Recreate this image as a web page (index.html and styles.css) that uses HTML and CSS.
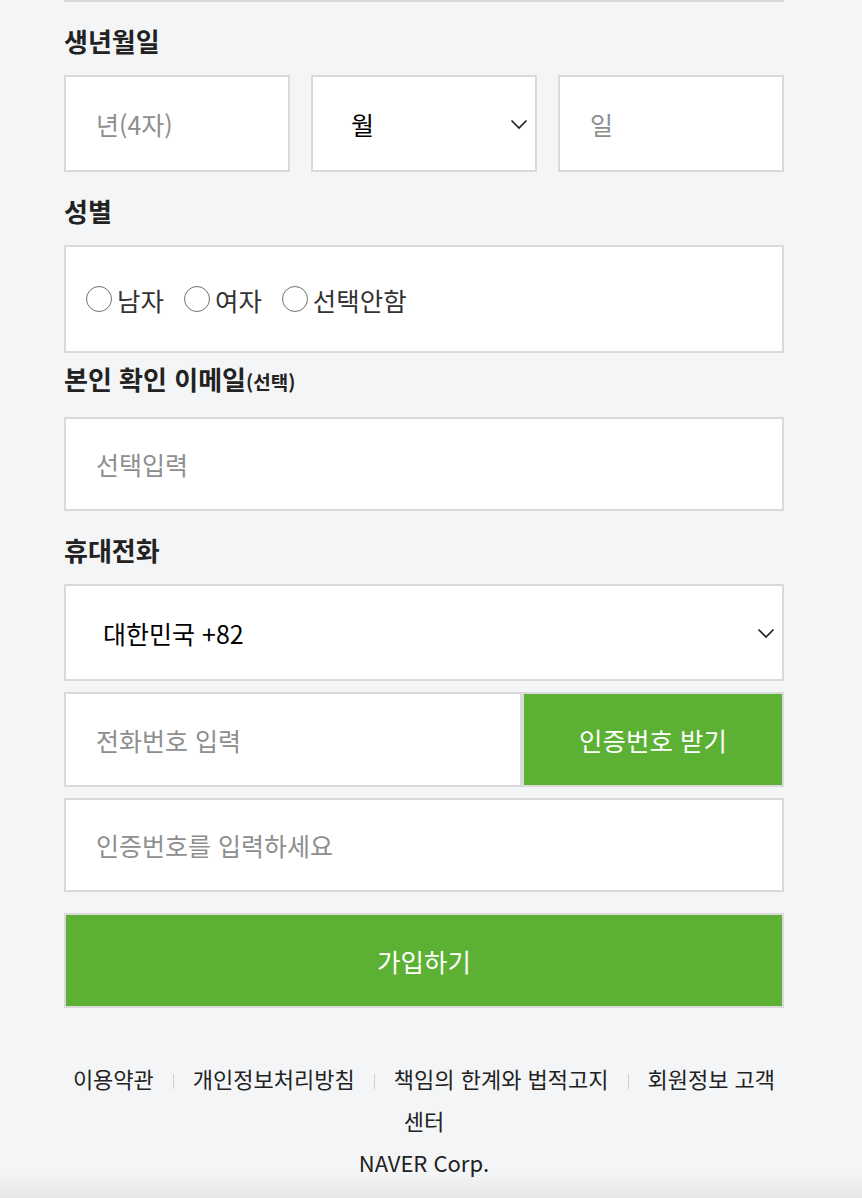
FILE: index.html
```html
<!DOCTYPE html>
<html lang="ko">
<head>
<meta charset="utf-8">
<title>회원가입</title>
<link rel="stylesheet" href="styles.css">
</head>
<body>
<div class="page">
  <div class="box-tail"></div>

  <h3 class="label label-first">생년월일</h3>
  <div class="birth-row">
    <input class="box field" type="text" placeholder="년(4자)">
    <div class="box select select-month">
      <span>월</span>
      <svg class="chev" width="18" height="11" viewBox="0 0 18 11"><polyline points="1.5,1.5 9,9 16.5,1.5" fill="none" stroke="#222" stroke-width="1.7"/></svg>
    </div>
    <input class="box field" type="text" placeholder="일">
  </div>

  <h3 class="label">성별</h3>
  <div class="box gender">
    <label class="radio"><input type="radio" name="g"><span>남자</span></label>
    <label class="radio"><input type="radio" name="g"><span>여자</span></label>
    <label class="radio"><input type="radio" name="g"><span>선택안함</span></label>
  </div>

  <h3 class="label label-email">본인 확인 이메일<span class="opt">(선택)</span></h3>
  <input class="box field field-email" type="text" placeholder="선택입력">

  <h3 class="label">휴대전화</h3>
  <div class="box select select-country">
    <span>대한민국 +82</span>
    <svg class="chev" width="18" height="11" viewBox="0 0 18 11"><polyline points="1.5,1.5 9,9 16.5,1.5" fill="none" stroke="#222" stroke-width="1.7"/></svg>
  </div>
  <div class="phone-row">
    <input class="box field field-phone" type="text" placeholder="전화번호 입력">
    <button class="btn btn-code" type="button">인증번호 받기</button>
  </div>
  <input class="box field field-verify" type="text" placeholder="인증번호를 입력하세요">

  <button class="btn btn-join" type="button">가입하기</button>

  <footer class="footer">
    <p class="links">
      <a>이용약관</a><span class="sep"></span><a>개인정보처리방침</a><span class="sep"></span><a>책임의 한계와 법적고지</a><span class="sep"></span><a>회원정보 고객<wbr>센터</a>
    </p>
    <p class="corp">NAVER Corp.</p>
  </footer>
</div>
</body>
</html>
```

FILE: styles.css
```css
html {
  background: #f4f5f7 linear-gradient(to bottom, rgba(230,231,233,0) calc(100vh - 26px), #e5e6e8 100vh) no-repeat fixed;
}
body {
  margin: 0;
  font-family: "Noto Sans CJK KR", "Noto Sans", sans-serif;
  color: #222;
}
.page {
  width: 720px;
  margin-left: 64px;
  display: flex;
  flex-direction: column;
}
.box-tail {
  height: 0;
  border-bottom: 2px solid #dadada;
}
.label {
  margin: 21px 0 16px;
  font-size: 26px;
  font-weight: 700;
  line-height: 36px;
  color: #222;
}
.label-first { margin-top: 21px; }
.label-email { margin-top: 8px; margin-bottom: 17px; }
.label .opt {
  font-size: 19px;
}
.box {
  box-sizing: border-box;
  background: #fff;
  border: 2px solid #dadada;
  margin: 0;
}
.field {
  font-family: inherit;
  font-size: 25px;
  padding: 0 0 0 30px;
  color: #222;
  outline: none;
  width: 100%;
}
.field::placeholder {
  color: #8e8e8e;
}
.birth-row {
  display: grid;
  grid-template-columns: 1fr 1fr 1fr;
  column-gap: 21px;
}
.birth-row .box {
  height: 97px;
}
.select {
  display: flex;
  align-items: center;
  justify-content: space-between;
  font-size: 25px;
  color: #000;
  padding: 0 7px 0 37px;
}
.select-month {
  padding-left: 38px;
}
.select-country {
  height: 97px;
  padding-left: 37px;
}
.chev {
  display: block;
  margin-top: 2px;
}
.gender {
  height: 108px;
  display: flex;
  align-items: center;
  padding-left: 20px;
  gap: 20px;
}
.radio {
  display: flex;
  align-items: center;
  gap: 5px;
  font-size: 25.5px;
  color: #333;
}
.radio input {
  appearance: none;
  -webkit-appearance: none;
  width: 26px;
  height: 26px;
  margin: 0;
  border: 1.8px solid #707070;
  border-radius: 50%;
  background: #fff;
  box-sizing: border-box;
}
.field-email {
  height: 94px;
}
.phone-row {
  display: grid;
  grid-template-columns: 1fr 262px;
  margin-top: 11px;
}
.field-phone {
  height: 95px;
}
.field-verify {
  height: 94px;
  margin-top: 11px;
}
.btn {
  box-sizing: border-box;
  border: 2px solid #dadada;
  background: #5cb135;
  color: #fff;
  font-family: inherit;
  font-size: 25.5px;
  margin: 0;
  padding: 0;
}
.btn-code {
  height: 95px;
}
.btn-join {
  height: 95px;
  margin-top: 21px;
}
.footer {
  margin-top: 49px;
  text-align: center;
  font-size: 22px;
  line-height: 42px;
  color: #222;
}
.footer p {
  margin: 0;
}
.links {
  word-break: keep-all;
}
.links a {
  color: #222;
}
.sep {
  display: inline-block;
  width: 1px;
  height: 15px;
  background: #cfcfcf;
  margin: 0 19px;
  vertical-align: -1px;
}
.corp {
  padding-bottom: 15px;
}
```
